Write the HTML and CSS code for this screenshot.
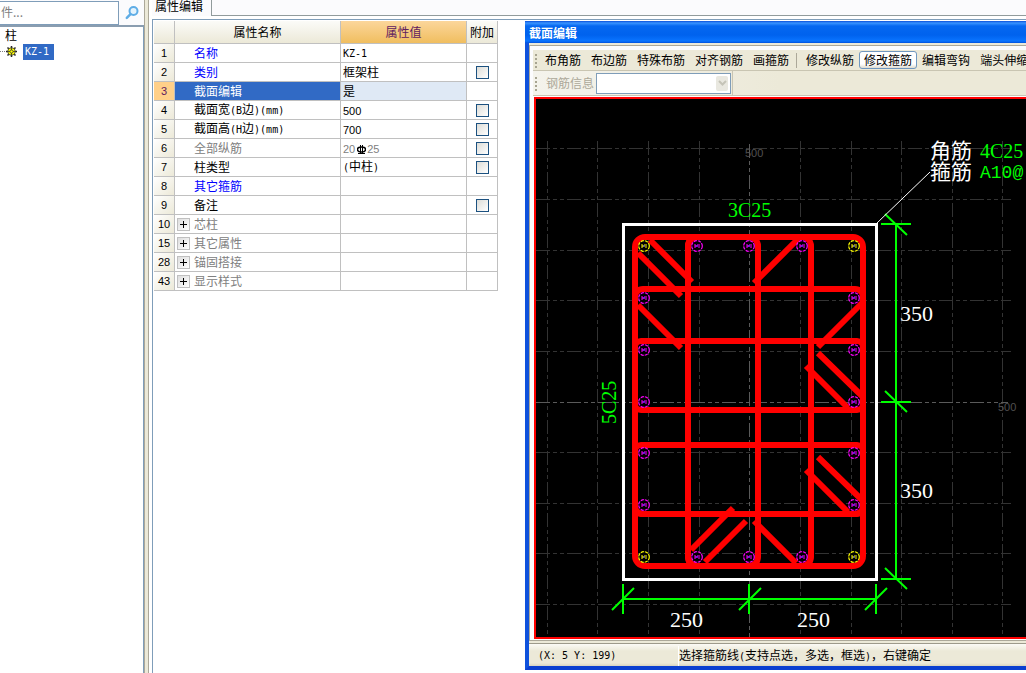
FILE: index.html
```html
<!DOCTYPE html>
<html lang="zh-CN">
<head>
<meta charset="utf-8">
<title>截面编辑</title>
<link rel="stylesheet" href="styles.css">
</head>
<body>
<div class="app">
  <aside class="side">
    <form class="search">
      <input class="search-box" type="text" placeholder="件..." aria-label="搜索构件">
      <button class="search-go" type="button" aria-label="搜索">
        <svg width="14" height="14" viewBox="0 0 14 14"><circle cx="8.500" cy="5" r="4" fill="#e4f3fd" stroke="#5fade6" stroke-width="2"/><path d="M5.500 8.200L1.800 11.800" stroke="#5fade6" stroke-width="2.500" stroke-linecap="round"/></svg>
      </button>
    </form>
    <div class="tree">
      <div class="tree-root">柱</div>
      <div class="tree-item">
        <span class="tree-dots"></span>
        <svg width="11" height="11" viewBox="0 0 11 11"><path d="M5.500 0v11M0 5.500h11M1.500 1.500l8 8M9.500 1.500l-8 8" stroke="#222" stroke-width="1.500"/><circle cx="5.500" cy="5.500" r="3.800" fill="#ff0" stroke="#333" stroke-width=".8"/><path d="M5.500 1v9M1 5.500h9" stroke="#333" stroke-width=".8"/><circle cx="5.500" cy="5.500" r="1.600" fill="#ff0" stroke="#333" stroke-width=".8"/></svg>
        <a class="tree-link mono" href="#kz1">KZ-1</a>
      </div>
    </div>
  </aside>
  <main class="main">
    <div class="tabs"><div class="tab">属性编辑</div><div class="tab-fill"></div></div>
    <div class="frame">
      <table class="props">
        <thead><tr><th class="c-num"></th><th class="c-name">属性名称</th><th class="c-val current">属性值</th><th class="c-add">附加</th></tr></thead>
        <tbody>
          <tr><th>1</th><td class="name blue">名称</td><td><span class="mono">KZ-1</span></td><td></td></tr>
          <tr><th>2</th><td class="name blue">类别</td><td>框架柱</td><td class="tick"><input type="checkbox" aria-label="附加 类别"></td></tr>
          <tr class="selected"><th>3</th><td class="name">截面编辑</td><td>是</td><td></td></tr>
          <tr><th>4</th><td class="name">截面宽<span class="mono">(B</span>边<span class="mono">)(mm)</span></td><td><span class="num">500</span></td><td class="tick"><input type="checkbox" aria-label="附加 截面宽"></td></tr>
          <tr><th>5</th><td class="name">截面高<span class="mono">(H</span>边<span class="mono">)(mm)</span></td><td><span class="num">700</span></td><td class="tick"><input type="checkbox" aria-label="附加 截面高"></td></tr>
          <tr class="gray"><th>6</th><td class="name">全部纵筋</td><td><span class="num">20</span><svg class="bar-sign" width="9" height="10" viewBox="0 0 9 10"><ellipse cx="4.500" cy="4.500" rx="4" ry="2.500" fill="none" stroke="#000" stroke-width="1.500"/><path d="M3.500 0v9M5.500 0v9M1 8.500h7" stroke="#000"/></svg><span class="num">25</span></td><td class="tick"><input type="checkbox" aria-label="附加 全部纵筋"></td></tr>
          <tr><th>7</th><td class="name">柱类型</td><td><span class="mono">(</span>中柱<span class="mono">)</span></td><td class="tick"><input type="checkbox" aria-label="附加 柱类型"></td></tr>
          <tr><th>8</th><td class="name blue">其它箍筋</td><td></td><td></td></tr>
          <tr><th>9</th><td class="name">备注</td><td></td><td class="tick"><input type="checkbox" aria-label="附加 备注"></td></tr>
          <tr class="gray"><th>10</th><td><div class="group"><button class="plus" type="button" aria-label="展开芯柱"></button>芯柱</div></td><td></td><td></td></tr>
          <tr class="gray"><th>15</th><td><div class="group"><button class="plus" type="button" aria-label="展开其它属性"></button>其它属性</div></td><td></td><td></td></tr>
          <tr class="gray"><th>28</th><td><div class="group"><button class="plus" type="button" aria-label="展开锚固搭接"></button>锚固搭接</div></td><td></td><td></td></tr>
          <tr class="gray"><th>43</th><td><div class="group"><button class="plus" type="button" aria-label="展开显示样式"></button>显示样式</div></td><td></td><td></td></tr>
        </tbody>
      </table>
      <section class="window">
        <h1 class="title">截面编辑</h1>
        <div class="body">
          <div class="toolbar">
            <span class="grip"></span>
            <button type="button">布角筋</button><button type="button">布边筋</button><button type="button">特殊布筋</button><button type="button">对齐钢筋</button><button type="button">画箍筋</button>
            <span class="sep"></span>
            <button type="button">修改纵筋</button><button type="button" class="active">修改箍筋</button><button type="button">编辑弯钩</button><button type="button">端头伸缩</button>
          </div>
          <div class="infobar">
            <div class="info">
              <span class="grip"></span>
              <label for="rebar">钢筋信息</label>
              <div class="combo">
                <select id="rebar" disabled><option></option></select>
                <span class="arrow"><svg width="9" height="6" viewBox="0 0 9 6"><path d="M1 1l3.500 3.500L8 1" fill="none" stroke="#c5c4b8" stroke-width="2"/></svg></span>
              </div>
            </div>
          </div>
          <div class="canvas">
            <svg class="drawing" viewBox="536 99 490 538" preserveAspectRatio="xMinYMin meet">
              <defs>
                <g id="bar"><circle r="5.300" fill="#000" stroke="currentColor" stroke-width="1.200" stroke-dasharray="3.200 1"/><path d="M-3 -1h2v2h-2M0 -1v2M0 -1h3M1 1h2" fill="none" stroke="currentColor"/><path class="core" d="M-1 0h2"/></g>
              </defs>
              <g class="grid">
                <path d="M547.500 141V637M597.500 141V637M648.500 141V637M699.500 141V637M800.500 141V637M851.500 141V637M901.500 141V637M952.500 141V637M1002.500 141V637"/>
                <path d="M536 148.500H1011M536 199.500H1011M536 250.500H1011M536 300.500H1011M536 351.500H1011M536 452.500H1011M536 503.500H1011M536 553.500H1011M536 604.500H1011"/>
                <path class="axis" d="M749.500 144V637M536 402.500H1008"/>
              </g>
              <text class="scale" x="745" y="157">500</text>
              <text class="scale" x="998" y="411">500</text>
              <rect x="623.500" y="224.500" width="253" height="355" fill="none" stroke="#fff" stroke-width="3"/>
              <g class="stirrup">
                <rect x="635" y="237" width="228" height="329" rx="10"/>
                <rect x="688" y="237" width="70" height="329" rx="9"/>
                <rect x="688" y="237" width="123" height="329" rx="9"/>
                <rect x="635" y="289" width="228" height="225" rx="8"/>
                <rect x="635" y="341" width="228" height="69" rx="6"/>
                <rect x="635" y="445" width="228" height="69" rx="6"/>
                <path d="M650 240L692 282M638 253L681 296M798 239L754 283M638 305L681 348M862 303L818 347M818 353L862 396M806 366L848 408M818 457L862 500M806 470L848 512M733 508L691 550M746 521L705 562M754 521L796 563"/>
              </g>
              <g color="#f0f">
                <use href="#bar" x="697" y="246"/><use href="#bar" x="749" y="246"/><use href="#bar" x="802" y="246"/>
                <use href="#bar" x="697" y="557"/><use href="#bar" x="749" y="557"/><use href="#bar" x="802" y="557"/>
                <use href="#bar" x="644" y="298"/><use href="#bar" x="644" y="350"/><use href="#bar" x="644" y="402"/><use href="#bar" x="644" y="453"/><use href="#bar" x="644" y="505"/>
                <use href="#bar" x="854" y="298"/><use href="#bar" x="854" y="350"/><use href="#bar" x="854" y="402"/><use href="#bar" x="854" y="453"/><use href="#bar" x="854" y="505"/>
              </g>
              <g color="#ff0">
                <use href="#bar" x="644" y="246"/><use href="#bar" x="854" y="246"/><use href="#bar" x="644" y="557"/><use href="#bar" x="854" y="557"/>
              </g>
              <g class="dims">
                <path d="M896 224V579M881 224H911M881 402H911M881 579H911M885 214L907 235M885 391L907 412M885 568L907 589"/>
                <path d="M623 599H876M623 584V614M749 584V614M876 584V614M612 610L634 588M739 610L761 588M865 610L887 588"/>
              </g>
              <path d="M877 223L930 172" stroke="#fff"/>
              <g class="green">
                <text x="728" y="217">3C25</text>
                <text transform="translate(616 424) rotate(-90)">5C25</text>
                <text x="980" y="158">4C25</text>
                <text class="tie" x="980" y="178">A10@</text>
              </g>
              <g class="white">
                <text class="cjk" x="930" y="158">角筋</text>
                <text class="cjk" x="930" y="179">箍筋</text>
                <text x="900" y="321">350</text><text x="900" y="498">350</text>
                <text x="670" y="627">250</text><text x="797" y="627">250</text>
              </g>
            </svg>
          </div>
        </div>
        <footer class="status"><span class="coords mono">(X: 5 Y: 199)</span><span class="hint">选择箍筋线<span class="mono">(</span>支持点选，多选，框选<span class="mono">)</span>，右键确定</span></footer>
      </section>
    </div>
  </main>
</div>
</body>
</html>
```

FILE: styles.css
```css
* { box-sizing: border-box; }
body {
  margin: 0;
  background: #fff;
  color: #000;
  font: 12px/16px "Noto Sans CJK SC", sans-serif;
  overflow: hidden;
}
button, input, select { font: inherit; color: inherit; }
.mono { font-family: "DejaVu Sans Mono", monospace; font-size: 10px; }
.num { font-family: "Liberation Sans", sans-serif; font-size: 11px; }

.app { display: flex; height: 100vh; }

/* left tree */
.side {
  flex: 0 0 149px;
  display: flex;
  flex-direction: column;
  background: linear-gradient(90deg, #aca899 0 1px, #ece9d8 1px 4px, #aca899 4px) right / 5px 100% no-repeat;
  padding-right: 5px;
}
.search { display: flex; height: 25px; padding-top: 1px; background: #fbfbfd; }
.search-box {
  width: 119px;
  height: 24px;
  padding: 0 0 4px 1px;
  border: 1px solid #7f9db9;
  border-left: 0;
  background: #fff;
}
.search-box::placeholder { color: #808080; opacity: 1; }
.search-go { flex: 1; display: grid; place-items: center; padding: 0; border: 0; background: none; }
.tree {
  flex: 1;
  border-top: 2px solid #8a9db0;
  border-right: 1px solid #7f9db9;
}
.tree-root { padding-left: 5px; }
.tree-item { display: flex; align-items: center; gap: 1px; height: 17px; }
.tree-dots { width: 5px; border-top: 1px dotted #808080; }
.tree-link {
  margin-left: 5px;
  padding: 0 5px 0 2px;
  background: #316ac5;
  color: #fff;
  text-decoration: none;
}

/* property panel */
.main { flex: 1; min-width: 0; display: flex; flex-direction: column; padding-left: 3px; }
.tabs { display: flex; height: 16px; margin-bottom: 3px; background: #fbfbfd; }
.tab { width: 59px; padding-left: 3px; line-height: 12px; white-space: nowrap; }
.tab-fill { flex: 1; border-left: 1px solid #919b9c; border-bottom: 1px solid #919b9c; }
.frame {
  flex: 1;
  min-height: 0;
  display: flex;
  align-items: flex-start;
  padding: 1px 0 3px 1px;
  border-top: 1px solid #7f9db9;
  border-left: 1px solid #7f9db9;
}
.props { flex: none; border-collapse: separate; border-spacing: 0; table-layout: fixed; width: 344px; }
.props th, .props td {
  height: 19px;
  padding: 0;
  border-right: 1px solid #c0c0c0;
  border-bottom: 1px solid #c0c0c0;
  font-weight: normal;
  text-align: left;
  white-space: nowrap;
}
.props td { padding-left: 2px; }
.props td.name { padding-left: 19px; }
.props thead th { height: 23px; text-align: center; background: linear-gradient(#fbfbf8, #ece9d8); }
.props thead th.current { background: linear-gradient(#fbd69b, #f0be5f); color: #602060; }
.c-num { width: 21px; }
.c-name { width: 166px; }
.c-val { width: 126px; }
.c-add { width: 31px; }
.props tbody th {
  text-align: center;
  font-family: "Liberation Sans", sans-serif;
  font-size: 11px;
  background: linear-gradient(135deg, #fff, #ece9d8);
}
.props td.blue { color: #00f; }
.gray td { color: #808080; }
.props .selected th { background: #ffd089; color: #602060; }
.selected td:nth-child(2) { background: #316ac5; color: #fff; }
.selected td:nth-child(3) { background: #dfe9f5; }
.props td.tick { padding: 0; text-align: center; }
.tick input {
  appearance: none;
  display: block;
  width: 13px;
  height: 13px;
  margin: 0 auto;
  border: 1px solid #1c5180;
  background: linear-gradient(135deg, #dcdcd7, #fff);
}
.bar-sign { margin: 0 1px 0 2px; vertical-align: -2px; }
.group { display: flex; align-items: center; gap: 4px; }
.plus {
  width: 13px;
  height: 13px;
  padding: 0;
  border: 1px solid #c0c0c0;
  background:
    linear-gradient(#000, #000) center / 7px 1px no-repeat,
    linear-gradient(#000, #000) center / 1px 7px no-repeat,
    linear-gradient(135deg, #ddd, #fff);
}

/* section editor window */
.window {
  flex: 1;
  min-width: 0;
  align-self: stretch;
  display: flex;
  flex-direction: column;
  margin-left: 27px;
  border-left: 4px solid #0f52dc;
  border-bottom: 4px solid #0a3fd0;
  background: #ece9d8;
}
.title {
  margin: 0 0 0 -4px;
  padding: 2px 0 0 4px;
  height: 22px;
  background: linear-gradient(#0a4fd8, #3a94ff 2px, #0668f0 5px, #0062ee 14px, #0a74ff 20px, #0050dd);
  color: #fff;
  font-size: 12px;
  line-height: 20px;
}
.body {
  flex: 1;
  min-height: 0;
  display: flex;
  flex-direction: column;
  margin-top: 2px;
  padding: 4px 0 0 3px;
  border-top: 1px solid #aca899;
  border-left: 1px solid #aca899;
  background: #fcfcfe;
}
.toolbar, .infobar { display: flex; background: #ece9d8; overflow: hidden; }
.toolbar { height: 21px; flex: none; border-bottom: 1px solid #c9c5b2; align-items: center; }
.grip {
  flex: none;
  width: 2px;
  height: 15px;
  margin: 0 3px 0 2px;
  background: radial-gradient(circle, #a7a491 1px, transparent 1px) 0 0 / 2px 4px;
}
.toolbar button {
  flex: none;
  height: 18px;
  padding: 0 4px;
  border: 1px solid transparent;
  border-radius: 3px;
  background: none;
  line-height: 14px;
}
.toolbar .active { border-color: #7098c0; background: linear-gradient(#fff, #fff 75%, #dedbd0); }
.sep { flex: none; width: 1px; height: 15px; margin: 0 4px 0 2px; background: #aca899; }
.infobar { height: 25px; flex: none; border-bottom: 1px solid #c9c5b2; background: linear-gradient(90deg, #f4f3ec, #ece9d8 50%); }
.info { display: flex; align-items: center; border-right: 1px solid #c9c5b2; padding-right: 1px; }
.info label { width: 50px; margin-left: 6px; color: #aca899; }
.combo { position: relative; width: 135px; }
.combo select {
  display: block;
  appearance: none;
  width: 100%;
  height: 21px;
  border: 1px solid #7f9db9;
  border-radius: 0;
  background: #fff;
  opacity: 1;
}
.arrow {
  position: absolute;
  inset: 3px 3px 3px auto;
  width: 12px;
  display: grid;
  place-items: center;
  border-radius: 2px;
  background: #e9e8e0;
  pointer-events: none;
}
.canvas {
  flex: 1;
  min-height: 0;
  margin: 1px 0 1px 1px;
  border: 2px solid #f00;
  border-right: 0;
  background: #000;
}
.drawing { display: block; width: 100%; height: 100%; font-family: "Liberation Serif", serif; }
.drawing path { fill: none; }
.grid path { stroke: #333; stroke-dasharray: 14 3 4 3 4 3; }
.grid .axis { stroke: #5a5a5a; }
.core { stroke: #33f; }
.scale { font: 11px "Liberation Sans", sans-serif; fill: #505050; }
.stirrup { fill: none; stroke: #f00; stroke-width: 6; }
.dims { stroke: #0f0; stroke-width: 2; }
.green { fill: #0f0; font-size: 20px; }
.green .tie { font-family: "Liberation Mono", monospace; font-size: 18px; }
.white { fill: #fff; font-size: 22px; }
.white .cjk { font-family: "Noto Sans CJK SC", sans-serif; font-size: 21px; }
.status {
  flex: none;
  display: flex;
  align-items: center;
  height: 26px;
  padding-top: 4px;
  border-top: 1px solid #aca899;
  background: linear-gradient(#ece9d8 2px, #9d9a8b 2px 3px, #fbfaf5 3px, #ece9d8 10px, #ece9d8 22px, #d8d4c0);
}
.coords { width: 149px; padding-left: 9px; white-space: pre; }
.hint { border-left: 1px solid #fff; white-space: nowrap; line-height: 18px; }
```
